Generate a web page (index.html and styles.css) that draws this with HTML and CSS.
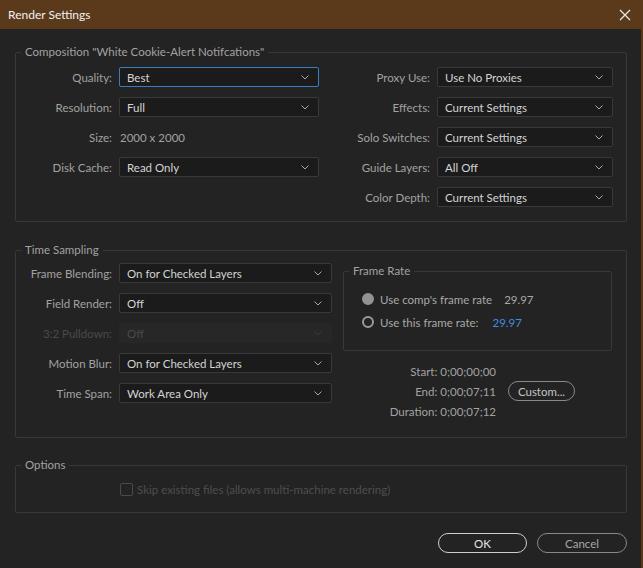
FILE: index.html
```html
<!DOCTYPE html>
<html lang="en">
<head>
<meta charset="utf-8">
<title>Render Settings</title>
<link rel="stylesheet" href="styles.css">
</head>
<body>
<div class="window">
  <div class="titlebar">
    <span class="title">Render Settings</span>
    <svg class="close" width="12" height="12" viewBox="0 0 12 12"><path d="M1 1L11 11M11 1L1 11" stroke="#e6e6e6" stroke-width="1.3" fill="none"/></svg>
  </div>
  <div class="content">
    <fieldset class="group comp">
      <legend>Composition "White Cookie-Alert Notifcations"</legend>
      <div class="comp-grid">
        <span class="label">Quality:</span>
        <div class="select focus"><span>Best</span><svg class="chev" width="8" height="5" viewBox="0 0 8 5"><path d="M0.5 0.5L4 4L7.5 0.5" stroke="#a8a8a8" fill="none"/></svg></div>
        <span class="label">Proxy Use:</span>
        <div class="select"><span>Use No Proxies</span><svg class="chev" width="8" height="5" viewBox="0 0 8 5"><path d="M0.5 0.5L4 4L7.5 0.5" stroke="#a8a8a8" fill="none"/></svg></div>

        <span class="label">Resolution:</span>
        <div class="select"><span>Full</span><svg class="chev" width="8" height="5" viewBox="0 0 8 5"><path d="M0.5 0.5L4 4L7.5 0.5" stroke="#a8a8a8" fill="none"/></svg></div>
        <span class="label">Effects:</span>
        <div class="select"><span>Current Settings</span><svg class="chev" width="8" height="5" viewBox="0 0 8 5"><path d="M0.5 0.5L4 4L7.5 0.5" stroke="#a8a8a8" fill="none"/></svg></div>

        <span class="label">Size:</span>
        <span class="value">2000 x 2000</span>
        <span class="label">Solo Switches:</span>
        <div class="select"><span>Current Settings</span><svg class="chev" width="8" height="5" viewBox="0 0 8 5"><path d="M0.5 0.5L4 4L7.5 0.5" stroke="#a8a8a8" fill="none"/></svg></div>

        <span class="label">Disk Cache:</span>
        <div class="select"><span>Read Only</span><svg class="chev" width="8" height="5" viewBox="0 0 8 5"><path d="M0.5 0.5L4 4L7.5 0.5" stroke="#a8a8a8" fill="none"/></svg></div>
        <span class="label">Guide Layers:</span>
        <div class="select"><span>All Off</span><svg class="chev" width="8" height="5" viewBox="0 0 8 5"><path d="M0.5 0.5L4 4L7.5 0.5" stroke="#a8a8a8" fill="none"/></svg></div>

        <span></span>
        <span></span>
        <span class="label">Color Depth:</span>
        <div class="select"><span>Current Settings</span><svg class="chev" width="8" height="5" viewBox="0 0 8 5"><path d="M0.5 0.5L4 4L7.5 0.5" stroke="#a8a8a8" fill="none"/></svg></div>
      </div>
    </fieldset>

    <fieldset class="group time">
      <legend>Time Sampling</legend>
      <div class="time-row">
        <div class="time-grid">
          <span class="label">Frame Blending:</span>
          <div class="select"><span>On for Checked Layers</span><svg class="chev" width="8" height="5" viewBox="0 0 8 5"><path d="M0.5 0.5L4 4L7.5 0.5" stroke="#a8a8a8" fill="none"/></svg></div>
          <span class="label">Field Render:</span>
          <div class="select"><span>Off</span><svg class="chev" width="8" height="5" viewBox="0 0 8 5"><path d="M0.5 0.5L4 4L7.5 0.5" stroke="#a8a8a8" fill="none"/></svg></div>
          <span class="label disabled">3:2 Pulldown:</span>
          <div class="select is-disabled"><span>Off</span><svg class="chev" width="8" height="5" viewBox="0 0 8 5"><path d="M0.5 0.5L4 4L7.5 0.5" stroke="#3a3a3a" fill="none"/></svg></div>
          <span class="label">Motion Blur:</span>
          <div class="select"><span>On for Checked Layers</span><svg class="chev" width="8" height="5" viewBox="0 0 8 5"><path d="M0.5 0.5L4 4L7.5 0.5" stroke="#a8a8a8" fill="none"/></svg></div>
          <span class="label">Time Span:</span>
          <div class="select"><span>Work Area Only</span><svg class="chev" width="8" height="5" viewBox="0 0 8 5"><path d="M0.5 0.5L4 4L7.5 0.5" stroke="#a8a8a8" fill="none"/></svg></div>
        </div>
        <div class="time-right">
          <fieldset class="group rate">
            <legend>Frame Rate</legend>
            <div class="rate-body">
              <div class="radio-row">
                <span class="radio filled"></span>
                <span class="radio-text">Use comp's frame rate</span>
                <span class="rate-val">29.97</span>
              </div>
              <div class="radio-row">
                <span class="radio"></span>
                <span class="radio-text">Use this frame rate:</span>
                <span class="rate-val blue">29.97</span>
              </div>
            </div>
          </fieldset>
          <div class="span-grid">
            <span class="span-text">Start: 0;00;00;00</span>
            <span></span>
            <span class="span-text">End: 0;00;07;11</span>
            <button class="pill custom">Custom...</button>
            <span class="span-text">Duration: 0;00;07;12</span>
            <span></span>
          </div>
        </div>
      </div>
    </fieldset>

    <fieldset class="group options">
      <legend>Options</legend>
      <div class="check-row">
        <span class="checkbox"></span>
        <span class="check-text">Skip existing files (allows multi-machine rendering)</span>
      </div>
    </fieldset>

    <div class="buttons">
      <button class="pill ok">OK</button>
      <button class="pill cancel">Cancel</button>
    </div>
  </div>
</div>
</body>
</html>
```
FILE: styles.css
```css
* { box-sizing: border-box; }
html, body { margin: 0; padding: 0; background: #232323; }
body {
  font-family: "Lato", "Noto Sans", sans-serif;
  font-size: 11.5px;
  color: #a2a2a2;
}
.window {
  width: 643px;
  height: 568px;
  background: #232323;
  border-right: 2px solid #5b3a1c;
  overflow: hidden;
}
.titlebar {
  height: 29px;
  background: #5b3a1c;
  display: flex;
  align-items: center;
  justify-content: space-between;
  padding: 0 10px 0 8px;
  color: #f0f0f0;
}
.title { font-size: 12px; }
.close { display: block; }
.content {
  padding: 0 14px 0 15px;
}
.group {
  margin: 0;
  padding: 0;
  border: 1px solid #383838;
  border-radius: 2px;
  min-width: 0;
}
.group legend {
  margin-left: 5px;
  padding: 0 4px;
  line-height: 16px;
  color: #a2a2a2;
}
.comp {
  margin-top: 15px;
  padding: 7px 0 14px 0;
}
.comp-grid {
  display: grid;
  grid-template-columns: 96px 200px 104px 176px;
  column-gap: 7px;
  row-gap: 10px;
  grid-auto-rows: 20px;
  align-items: center;
}
.label {
  text-align: right;
  color: #a2a2a2;
  white-space: nowrap;
}
.label.disabled { color: #4a4a4a; }
.value { padding-left: 1px; color: #a2a2a2; }
.select {
  height: 20px;
  background: #1b1b1b;
  border: 1px solid #393939;
  border-radius: 2px;
  display: flex;
  align-items: center;
  justify-content: space-between;
  padding: 0 9px 0 7px;
  color: #d4d4d4;
  white-space: nowrap;
}
.select.focus { border-color: #3a7cc0; }
.select.is-disabled {
  background: #272727;
  border-color: #272727;
  color: #4a4a4a;
}
.chev { display: block; }

.time {
  margin-top: 20px;
  padding: 5px 0 16px 0;
}
.time-row {
  display: flex;
  align-items: flex-start;
}
.time-grid {
  display: grid;
  grid-template-columns: 96px 213px;
  column-gap: 7px;
  row-gap: 10px;
  grid-auto-rows: 20px;
  align-items: center;
}
.time-right {
  margin-left: 11px;
  width: 269px;
}
.rate {
  padding: 12px 0 20px 0;
}
.rate-body {
  padding-left: 18px;
}
.radio-row {
  display: flex;
  align-items: center;
  height: 16px;
  color: #a8a8a8;
}
.radio-row + .radio-row { margin-top: 7px; }
.radio {
  width: 12px;
  height: 12px;
  border-radius: 50%;
  border: 2px solid #9a9a9a;
  margin-right: 6px;
}
.radio.filled {
  background: #939393;
  border-color: #939393;
}
.rate-val { margin-left: 12px; color: #a8a8a8; }
.rate-val.blue { margin-left: 14px; color: #3d8ee0; }

.span-grid {
  margin-top: 10px;
  display: grid;
  grid-template-columns: 153px 67px;
  column-gap: 12px;
  grid-auto-rows: 20px;
  align-items: center;
}
.span-text {
  text-align: right;
  color: #a2a2a2;
  white-space: nowrap;
}
.pill {
  font-family: inherit;
  font-size: 11.5px;
  height: 20px;
  border-radius: 10px;
  background: transparent;
  padding: 0;
  cursor: default;
}
.custom {
  width: 67px;
  border: 1px solid #8a8a8a;
  color: #c4c4c4;
}

.options {
  margin-top: 19px;
  padding: 8px 0 15px 0;
}
.check-row {
  display: flex;
  align-items: center;
  height: 16px;
  padding-left: 104px;
}
.checkbox {
  width: 13px;
  height: 13px;
  border: 1px solid #4a4a4a;
  border-radius: 2px;
  margin-right: 4px;
  flex: none;
}
.check-text { color: #4e4e4e; white-space: nowrap; }

.buttons {
  margin-top: 20px;
  display: flex;
  justify-content: flex-end;
  gap: 10px;
}
.ok {
  width: 89px;
  border: 1px solid #cfcfcf;
  color: #e6e6e6;
}
.cancel {
  width: 90px;
  border: 1px solid #8a8a8a;
  color: #a8a8a8;
}
```
